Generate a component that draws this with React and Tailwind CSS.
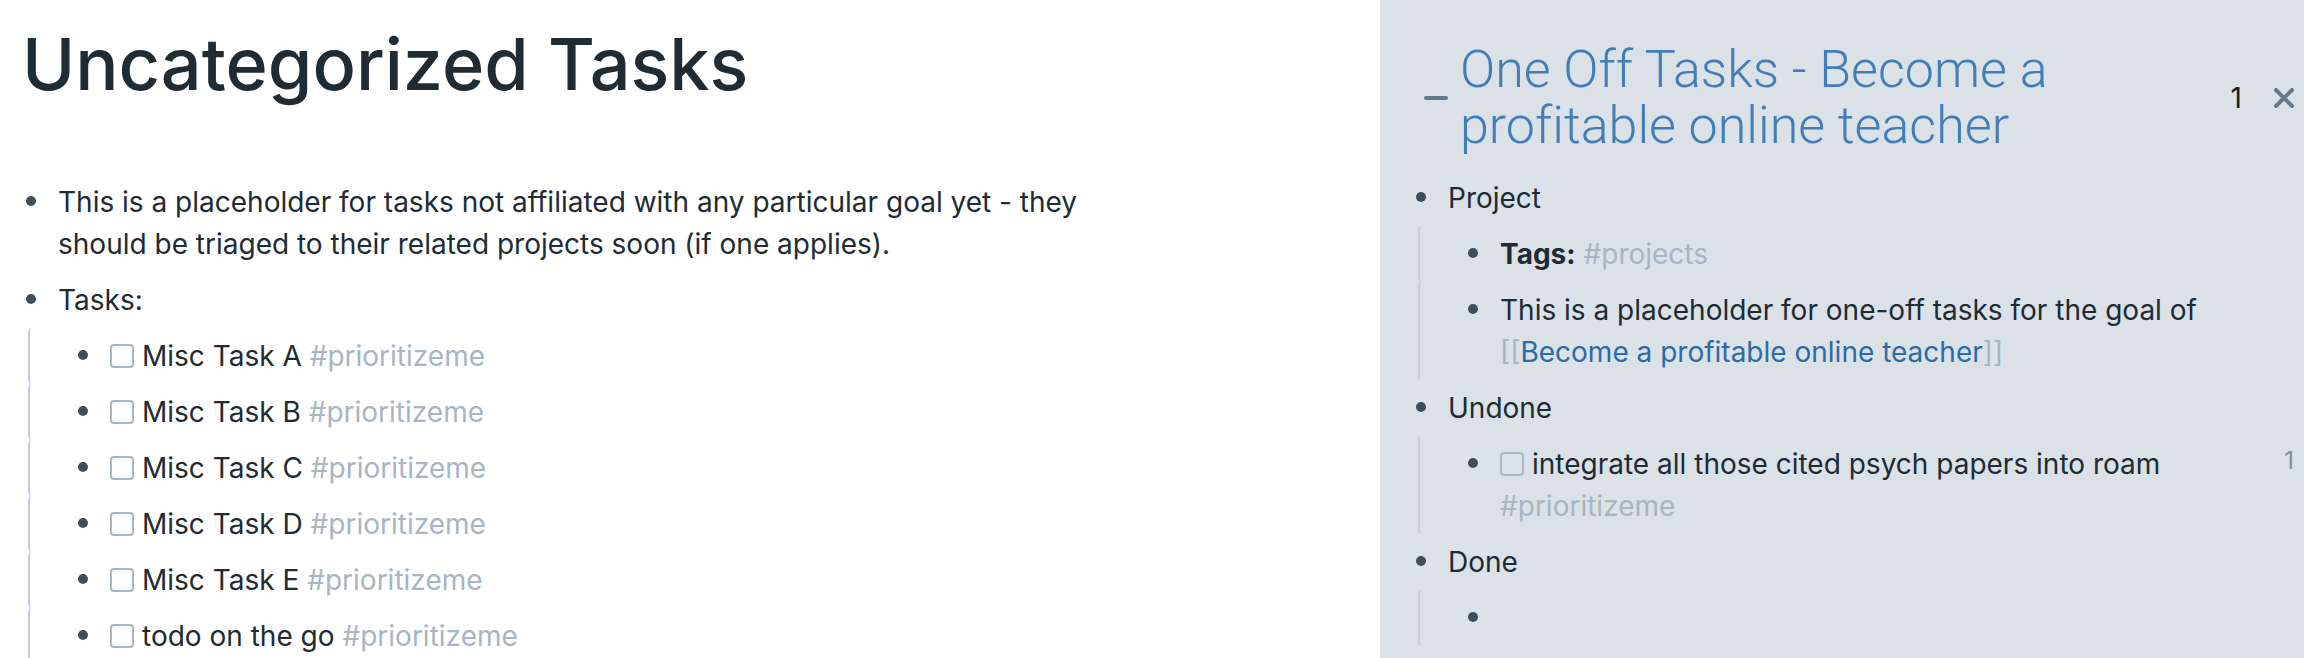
import React from "react";

const tasks = [
  "Misc Task A",
  "Misc Task B",
  "Misc Task C",
  "Misc Task D",
  "Misc Task E",
  "todo on the go",
];

function Block({ children, aside }) {
  return (
    <div className="flex items-start py-[7px]">
      <span className="flex h-[42px] w-8 shrink-0 items-center">
        <span className="mb-0.5 size-2.5 rounded-full bg-[#3f4e5b]" />
      </span>
      <div className="min-w-0 flex-1">{children}</div>
      {aside}
    </div>
  );
}

function Item({ children, nested }) {
  return (
    <li>
      <Block>{children}</Block>
      {nested}
    </li>
  );
}

function Children({ children }) {
  return <ul className="ml-0.5">{children}</ul>;
}

function Child({ children, aside }) {
  return (
    <li className="rounded-[4px] border-l-2 border-[#c3ced8] pl-12">
      <Block aside={aside}>{children}</Block>
    </li>
  );
}

function Tag({ children }) {
  return (
    <a href="#tag" className="text-[#a8b5c2]">
      {children}
    </a>
  );
}

function Todo({ label, tag }) {
  return (
    <>
      <label>
        <input
          type="checkbox"
          className="mr-2 -mb-0.5 inline-block size-6 appearance-none rounded-[4px] border-2 border-[#a8b5c2] align-baseline"
        />
        {label}
      </label>{" "}
      <Tag>{tag}</Tag>
    </>
  );
}

export default function App() {
  return (
    <div className="grid h-screen grid-cols-[115fr_77fr] overflow-hidden bg-white font-['Inter',sans-serif] text-[28px] leading-[42px] text-[#202b33]">
      <main className="min-w-0 pt-5 pr-60 pl-[26px]">
        <h1 className="-ml-1 text-[72px] leading-[88px] font-medium">Uncategorized Tasks</h1>
        <ul className="mt-[66px]">
          <Item>
            This is a placeholder for tasks not affiliated with any particular goal yet - they should be
            triaged to their related projects soon (if one applies).
          </Item>
          <Item
            nested={
              <Children>
                {tasks.map((t) => (
                  <Child key={t}>
                    <Todo label={t} tag="#prioritizeme" />
                  </Child>
                ))}
              </Children>
            }
          >
            Tasks:
          </Item>
        </ul>
      </main>

      <aside className="min-w-0 bg-[#dae1e7] pt-[42px] pr-2.5 pl-9">
        <header className="flex items-center">
          <button type="button" aria-label="Collapse" className="ml-2 w-9 shrink-0">
            <svg viewBox="0 0 24 4" className="h-1 w-6">
              <rect width="24" height="4" rx="2" fill="#62788a" />
            </svg>
          </button>
          <h2 className="flex-1 font-['Roboto',sans-serif] text-[52px] leading-[56px] font-light [font-variant-ligatures:no-common-ligatures]">
            <a href="#page" className="text-[#437db8]">
              One Off Tasks - Become a profitable online teacher
            </a>
          </h2>
          <span className="mr-8 ml-4 text-[#182026]">1</span>
          <button type="button" aria-label="Close" className="shrink-0">
            <svg viewBox="0 0 20 20" className="size-5">
              <path d="M2 2L18 18M18 2L2 18" stroke="#677a89" strokeWidth="4" strokeLinecap="round" />
            </svg>
          </button>
        </header>
        <ul className="mt-4">
          <Item
            nested={
              <Children>
                <Child>
                  <b className="font-bold">Tags:</b> <Tag>#projects</Tag>
                </Child>
                <Child>
                  This is a placeholder for one-off tasks for the goal of{" "}
                  <span className="whitespace-nowrap text-[#a8b5c2]">
                    [[
                    <a href="#goal" className="text-[#2c6ba5]">
                      Become a profitable online teacher
                    </a>
                    ]]
                  </span>
                </Child>
              </Children>
            }
          >
            Project
          </Item>
          <Item
            nested={
              <Children>
                <Child
                  aside={<span className="text-2xl leading-9 text-[#858e95]">1</span>}
                >
                  <Todo label="integrate all those cited psych papers into roam" tag="#prioritizeme" />
                </Child>
              </Children>
            }
          >
            Undone
          </Item>
          <Item
            nested={
              <Children>
                <Child />
              </Children>
            }
          >
            Done
          </Item>
        </ul>
      </aside>
    </div>
  );
}
